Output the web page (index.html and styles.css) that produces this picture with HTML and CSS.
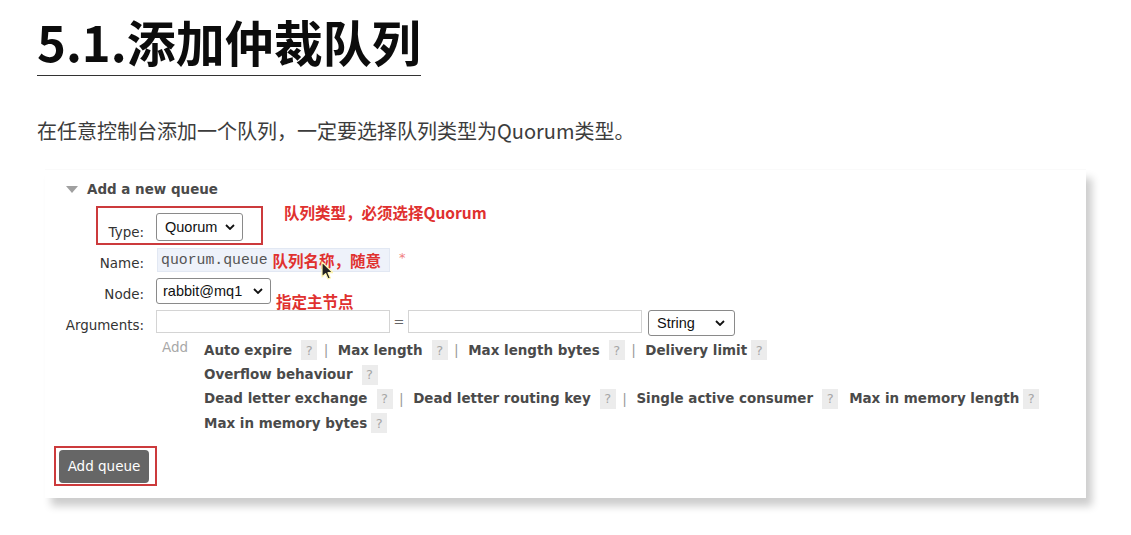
FILE: index.html
```html
<!DOCTYPE html>
<html lang="zh">
<head>
<meta charset="utf-8">
<title>5.1.添加仲裁队列</title>
<link rel="stylesheet" href="styles.css">
</head>
<body>
<main class="page">
  <h1 class="title">5.1.添加仲裁队列</h1>
  <p class="intro">在任意控制台添加一个队列，一定要选择队列类型为Quorum类型。</p>

  <section class="card">
    <div class="card-head"><span class="tri"></span>Add a new queue</div>

    <div class="form">
      <div class="label">Type:</div>
      <div class="ctrl">
        <div class="select sel-type">Quorum<svg class="chev" viewBox="0 0 10 6"><path d="M1 1l4 4 4-4" fill="none" stroke="#111" stroke-width="1.8"/></svg></div>
      </div>

      <div class="label">Name:</div>
      <div class="ctrl">
        <div class="input-name"><span class="mono">quorum.queue</span><span class="note note-inline">队列名称，随意</span></div>
        <span class="req">*</span>
      </div>

      <div class="label">Node:</div>
      <div class="ctrl">
        <div class="select sel-node">rabbit@mq1<svg class="chev" viewBox="0 0 10 6"><path d="M1 1l4 4 4-4" fill="none" stroke="#111" stroke-width="1.8"/></svg></div>
      </div>

      <div class="label">Arguments:</div>
      <div class="ctrl">
        <div class="input-arg"></div>
        <span class="eq">=</span>
        <div class="input-arg"></div>
        <div class="select sel-string">String<svg class="chev" viewBox="0 0 10 6"><path d="M1 1l4 4 4-4" fill="none" stroke="#111" stroke-width="1.8"/></svg></div>
      </div>

      <div class="label"></div>
      <div class="ctrl opts-row">
        <span class="add">Add</span>
        <div class="opts">
          <div class="line"><span class="opt">Auto expire</span><span class="help">?</span><span class="sep">|</span><span class="opt">Max length</span><span class="help">?</span><span class="sep">|</span><span class="opt">Max length bytes</span><span class="help">?</span><span class="sep">|</span><span class="opt">Delivery limit</span><span class="help tight">?</span></div>
          <div class="line"><span class="opt">Overflow behaviour</span><span class="help">?</span></div>
          <div class="line"><span class="opt">Dead letter exchange</span><span class="help">?</span><span class="sep">|</span><span class="opt">Dead letter routing key</span><span class="help">?</span><span class="sep">|</span><span class="opt">Single active consumer</span><span class="help">?</span><span class="opt gap">Max in memory length</span><span class="help tight">?</span></div>
          <div class="line"><span class="opt">Max in memory bytes</span><span class="help tight">?</span></div>
        </div>
      </div>
    </div>

    <div class="actions">
      <button class="btn" type="button">Add queue</button>
      <span class="mark mark-btn"></span>
    </div>

    <span class="mark mark-type"></span>
    <span class="note note-type">队列类型，必须选择Quorum</span>
    <span class="note note-node">指定主节点</span>
    <svg class="cursor" viewBox="0 0 12 19"><path d="M1 1v15l3.6-3.4 2.4 5.4 2.4-1-2.4-5.3H12z" fill="#222" stroke="#fff6b0" stroke-width="1.2" stroke-linejoin="round"/></svg>
  </section>
</main>
</body>
</html>
```

FILE: styles.css
```css
* { box-sizing: border-box; }

html, body {
  margin: 0;
  background: #fff;
}

.page {
  padding: 11px 0 40px 0;
  font-family: "Noto Sans CJK SC", "Noto Sans", sans-serif;
}

.title {
  display: inline-block;
  margin: 0 0 0 37px;
  font-size: 49px;
  line-height: 60px;
  font-weight: 700;
  color: #0c0c0c;
  padding-bottom: 4px;
  border-bottom: 1px solid #333;
  letter-spacing: 0;
}

.intro {
  margin: 40px 0 0 37px;
  font-size: 20px;
  line-height: 30px;
  color: #3c3c3c;
}

.card {
  position: relative;
  margin: 24px 0 0 45px;
  width: 1041px;
  height: 328px;
  background: #fff;
  box-shadow: 6px 8px 8px rgba(0, 0, 0, 0.2), 0 -1px 1px rgba(0, 0, 0, 0.02);
  font-family: "DejaVu Sans", Verdana, sans-serif;
  font-size: 13.46px;
  color: #444;
  padding: 9px 0 0 0;
}

.card-head {
  display: flex;
  align-items: center;
  height: 20px;
  padding-left: 21px;
  font-weight: 700;
  color: #4a4a4a;
}

.tri {
  width: 0;
  height: 0;
  border-left: 6px solid transparent;
  border-right: 6px solid transparent;
  border-top: 7px solid #a0a0a0;
  margin-right: 9px;
}

.form {
  display: grid;
  grid-template-columns: 99px 1fr;
  column-gap: 12px;
  margin-top: 14px;
  align-items: center;
}

.label {
  text-align: right;
  color: #333;
  padding-top: 6px;
  align-self: center;
}

.ctrl {
  display: flex;
  align-items: center;
  min-height: 24px;
}

/* row vertical rhythm */
.form > .label:nth-child(1) { padding-top: 11px; }
.form > .ctrl:nth-child(2) { height: 28px; }
.form > .ctrl:nth-child(4) { height: 24px; margin-top: 7px; }
.form > .ctrl:nth-child(6) { height: 26px; margin-top: 6px; }
.form > .ctrl:nth-child(8) { height: 26px; margin-top: 6px; align-items: flex-start; }
.form > .label:nth-child(3) { margin-top: 7px; }
.form > .label:nth-child(5) { margin-top: 6px; }
.form > .label:nth-child(7) { margin-top: 6px; padding-top: 5px; }

.select {
  display: flex;
  align-items: center;
  justify-content: space-between;
  border: 1px solid #8a8a8a;
  border-radius: 3px;
  background: #fff;
  font-family: "Liberation Sans", Arial, sans-serif;
  font-size: 14.5px;
  color: #111;
  padding: 0 7px 0 8px;
}

.chev { width: 10px; height: 6px; }

.sel-type { width: 87px; height: 28px; }
.sel-node { width: 115px; height: 26px; padding-left: 6px; }
.sel-string { width: 87px; height: 26px; margin-left: 6px; padding-left: 8px; padding-right: 9px; }

.input-name {
  display: flex;
  align-items: center;
  width: 233px;
  height: 24px;
  margin-left: 1px;
  background: #eef2fa;
  border: 1px solid #e2e8f3;
  padding-left: 3px;
}

.mono {
  font-family: "Liberation Mono", "Courier New", monospace;
  font-size: 14.8px;
  color: #555;
}

.note {
  font-family: "Noto Sans CJK SC", sans-serif;
  font-weight: 700;
  font-size: 15.5px;
  line-height: 20px;
  color: #e0312f;
  white-space: nowrap;
}

.note-inline { margin-left: 5px; }

.req {
  color: #f08080;
  margin-left: 9px;
  margin-top: -6px;
  font-size: 13px;
}

.input-arg {
  width: 234px;
  height: 23px;
  border: 1px solid #d4d4d4;
  background: #fff;
}

.eq {
  width: 18px;
  text-align: center;
  color: #666;
  font-size: 13px;
  line-height: 23px;
}

.opts-row {
  display: flex;
  align-items: flex-start;
  margin-top: 2px;
}

.add {
  width: 48px;
  padding-left: 6px;
  color: #a8a8a8;
  line-height: 20px;
}

.opts {
  display: flex;
  flex-direction: column;
}

.line {
  display: flex;
  align-items: center;
  height: 24.4px;
  white-space: nowrap;
}

.opt {
  font-weight: 700;
  color: #4a4a4a;
}

.opt.gap { margin-left: 11px; }

.help {
  display: inline-flex;
  align-items: center;
  justify-content: center;
  width: 16px;
  height: 20px;
  margin-left: 9px;
  background: #ececec;
  color: #a6a6a6;
  font-size: 13px;
}

.help.tight { margin-left: 4px; }

.sep {
  margin: 0 10px 0 7px;
  color: #9a9a9a;
  font-family: "Liberation Sans", Arial, sans-serif;
  font-size: 14px;
}

.actions {
  position: relative;
  display: inline-block;
  margin: 14px 0 0 14px;
}

.btn {
  display: block;
  width: 90px;
  height: 33px;
  border: 0;
  border-radius: 4px;
  background: #666;
  color: #fff;
  font-family: "DejaVu Sans", Verdana, sans-serif;
  font-size: 13.5px;
  padding: 0;
}

.mark {
  position: absolute;
  border: 2px solid #cc3a3c;
  pointer-events: none;
}

.mark-btn { left: -5px; top: -4px; width: 103px; height: 40px; }

.mark-type { left: 51px; top: 36px; width: 167px; height: 39px; }

.note-type { position: absolute; left: 239px; top: 32px; }

.note-node { position: absolute; left: 231px; top: 121px; }

.cursor {
  position: absolute;
  left: 276px;
  top: 91px;
  width: 12px;
  height: 19px;
}
```
